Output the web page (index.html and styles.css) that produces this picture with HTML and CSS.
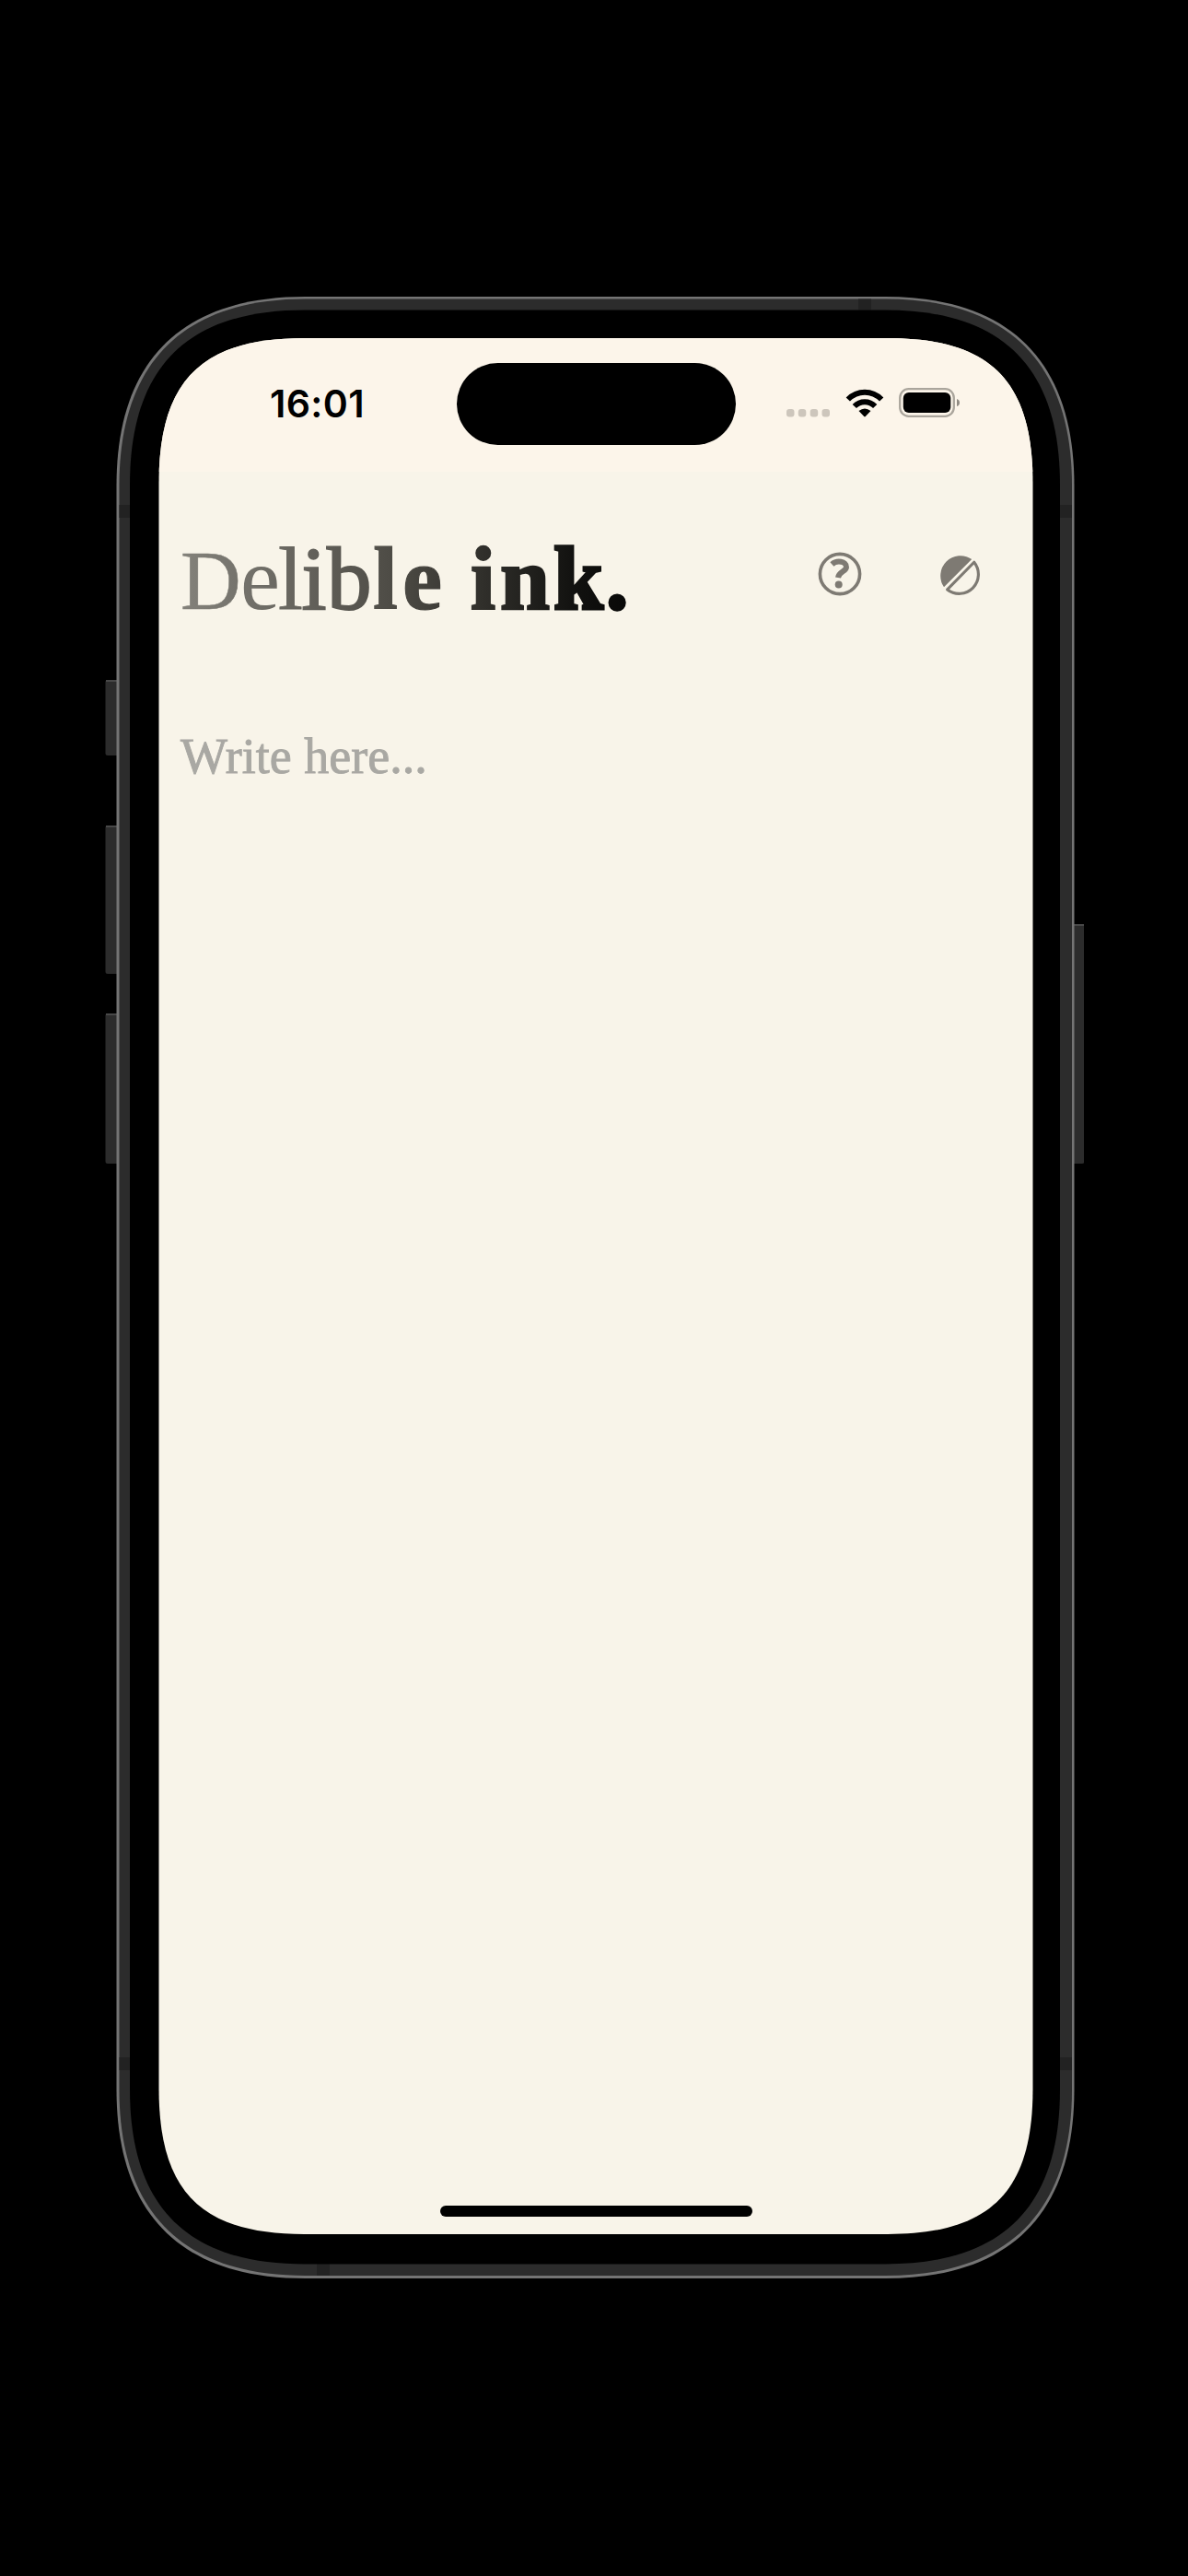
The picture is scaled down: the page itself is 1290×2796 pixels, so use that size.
FILE: index.html
```html
<!DOCTYPE html>
<html lang="en">
<head>
<meta charset="utf-8">
<title>Delible ink.</title>
<link rel="stylesheet" href="styles.css">
</head>
<body>
<div class="phone">
  <svg class="frame" viewBox="114 322 1063 2152" aria-hidden="true">
    <g class="metal">
      <path d="M127 738h-10q-2.500 0-2.500 2.500v77q0 2.500 2.500 2.500h10zM127 896h-10q-2.500 0-2.500 2.500v156q0 2.500 2.500 2.500h10zM127 1100h-10q-2.500 0-2.500 2.500v158q0 2.500 2.500 2.500h10zM1166 1003h9q2.500 0 2.500 2.500v255q0 2.500-2.500 2.500h-9z"/>
    </g>
    <path class="button-edge" d="M115 739h12M115 897h12M115 1101h12M1166 1004h11"/>
    <path class="rim" d="M126.500 527C126.500 392 196.500 322 331.500 322H961.500C1096.500 322 1166.500 392 1166.500 527V2268C1166.500 2403 1096.500 2473 961.500 2473H331.500C196.500 2473 126.500 2403 126.500 2268Z"/>
    <path class="metal" d="M129.500 527C129.500 394 198.500 324.500 331.500 324.500H961.500C1094.500 324.500 1164 394 1164 527V2268C1164 2401 1094.500 2470 961.500 2470H331.500C198.500 2470 129.500 2401 129.500 2268Z"/>
    <path class="seam" d="M129.500 548h12v14h-12zM1151 548h13v14h-13zM129.500 2233h12v14h-12zM1151 2233h13v14h-13zM932 324.500h14v12h-14zM344 2457h14v13h-14z"/>
    <path class="bezel" d="M141 526.500C141 399 203 336.500 331 336.500H961C1089 336.500 1151 399 1151 526.500V2267.500C1151 2395 1089 2457.500 961 2457.500H331C203 2457.500 141 2395 141 2267.500Z"/>
  </svg>
  <main class="screen">
    <header class="status">
      <span class="time">16:01</span>
      <span class="island"></span>
      <span class="signals">
        <svg width="48" height="9" viewBox="0 0 48 9"><g fill="#cdc6bc"><rect x="0" width="8.500" height="8.500" rx="3"/><rect x="12.800" width="8.500" height="8.500" rx="3"/><rect x="25.700" width="8.500" height="8.500" rx="3"/><rect x="38.500" width="8.500" height="8.500" rx="3"/></g></svg>
        <svg class="wifi" width="42" height="31" viewBox="0 0 42 31"><g fill="none" stroke="#000" stroke-width="6"><path d="M2.800 11.500Q10.500 3.700 21 3.700T39.200 11.500"/><path d="M9.800 19Q14.500 14.200 21 14.200T32.200 19"/></g><path d="M14.500 24Q21 18.800 27.500 24L22 29.700Q21 30.800 20 29.700Z"/></svg>
        <svg class="battery" width="67" height="32" viewBox="0 0 67 32"><rect x="1.200" y="1.200" width="58.600" height="29.600" rx="9.500" fill="none" stroke="#aaa59c" stroke-width="2.300"/><rect x="4.800" y="5" width="51.500" height="22" rx="6"/><path d="M63 12Q66 13 66 16T63 20Z" fill="#918c84"/></svg>
      </span>
    </header>
    <section class="toolbar">
      <svg class="title" width="500" height="130" viewBox="0 0 500 130" role="heading" aria-level="1">
        <defs><linearGradient id="ink" gradientUnits="userSpaceOnUse" x1="0" y1="0" x2="490" y2="0"><stop offset="0" stop-color="#84827b"/><stop offset=".5" stop-color="#4a4842"/><stop offset=".7" stop-color="#2c2b27"/><stop offset=".88" stop-color="#11110f"/><stop offset="1" stop-color="#080807"/></linearGradient></defs>
        <text y="101" fill="url(#ink)" stroke="url(#ink)"><tspan class="cap" x="1">D</tspan><tspan class="w1" x="66">e</tspan><tspan class="w2" x="107">l</tspan><tspan class="w3" x="132.500">i</tspan><tspan class="w3" x="160">b</tspan><tspan class="w4" x="210">l</tspan><tspan class="w4" x="242">e</tspan><tspan> </tspan><tspan class="w5" x="316">i</tspan><tspan class="w5" x="348">n</tspan><tspan class="w6" x="406">k</tspan><tspan class="w6" x="463">.</tspan></text>
      </svg>
      <div class="actions">
        <svg width="48" height="48" viewBox="0 0 48 48" aria-label="Help"><circle cx="24" cy="24" r="21.600" fill="none" stroke="#7e7a73" stroke-width="3.600"/><path d="M15.400 13.500C20.500 8.800 31.300 10 31 16.500C30.700 21.500 23 21.200 22 28" fill="none" stroke="#7e7a73" stroke-width="6"/><circle cx="22.700" cy="35.600" r="4" fill="#7e7a73"/></svg>
        <svg width="46" height="46" viewBox="0 0 44 44" aria-label="Contrast"><path d="M6.700 35.600A20.800 20.800 0 0 1 35.600 6.700Z" fill="#7e7a73"/><path d="M38 9.800A20 20 0 0 1 10.200 38.200Z" fill="none" stroke="#7e7a73" stroke-width="3" stroke-linejoin="round"/></svg>
      </div>
    </section>
    <section class="editor">Write here...</section>
    <div class="home"></div>
  </main>
</div>
</body>
</html>
```
FILE: styles.css
```css
* { box-sizing: border-box; }

body {
  margin: 0;
  height: 2796px;
  padding: 322px 0 0 114px;
  background: #000;
}

.phone {
  position: relative;
  width: 1063px;
  height: 2152px;
  padding: 45px 54px 48px 58px;
}

.frame {
  position: absolute;
  inset: 0;
  width: 1063px;
  height: 2152px;
}

.metal { fill: #2c2c2c; }
.rim { fill: #747474; }
.seam { fill: #222; }
.bezel { fill: #000; }
.button-edge { stroke: #484848; stroke-width: 2; }

.screen {
  position: relative;
  display: flex;
  flex-direction: column;
  width: 950px;
  height: 2058px;
  background: #f8f4e9;
  clip-path: path("M.5 158C.5 46 46.500 0 158.500 0H791.500C903.500 0 949.500 46 949.500 158V1900C949.500 2012 903.500 2058 791.500 2058H158.500C46.500 2058 .5 2012 .5 1900Z");
}

.status {
  display: flex;
  align-items: flex-start;
  height: 145px;
  background: #fcf5ea;
}

.time {
  width: 323.500px;
  padding: 46px 0 0 121px;
  font: 600 41px/50px Inter, sans-serif;
  letter-spacing: 0.4px;
  color: #000;
}

.island {
  width: 303px;
  height: 89px;
  margin-top: 27px;
  border-radius: 45px;
  background: #000;
}

.signals {
  display: flex;
  align-items: flex-end;
  margin: 54px 0 0 55px;
  height: 32px;
}

.wifi { margin-left: 16px; }
.battery { margin-left: 16.500px; }

.toolbar {
  display: flex;
  padding: 48px 57px 0 23px;
  height: 240px;
}

.title {
  font-family: "Liberation Serif", serif;
  font-size: 97px;
}

.cap { font-size: 91px; stroke-width: 0.5px; }
.w1 { stroke-width: 0; }
.w2 { stroke-width: 1px; }
.w3 { stroke-width: 2px; }
.w4 { font-weight: 700; stroke-width: 1.2px; }
.w5 { font-weight: 700; stroke-width: 2.5px; }
.w6 { font-weight: 700; stroke-width: 3.5px; }

.actions {
  display: flex;
  align-items: center;
  gap: 82px;
  height: 48px;
  margin: 39px 0 0 193px;
}

.editor {
  flex: 1;
  padding: 38px 24px;
  font: 54px/62px "Liberation Serif", serif;
  color: #a9a8a3;
  -webkit-text-stroke: 0.9px #a9a8a3;
}

.home {
  width: 339px;
  height: 12px;
  margin: 0 0 19px 305.500px;
  border-radius: 6px;
  background: #000;
}
```
